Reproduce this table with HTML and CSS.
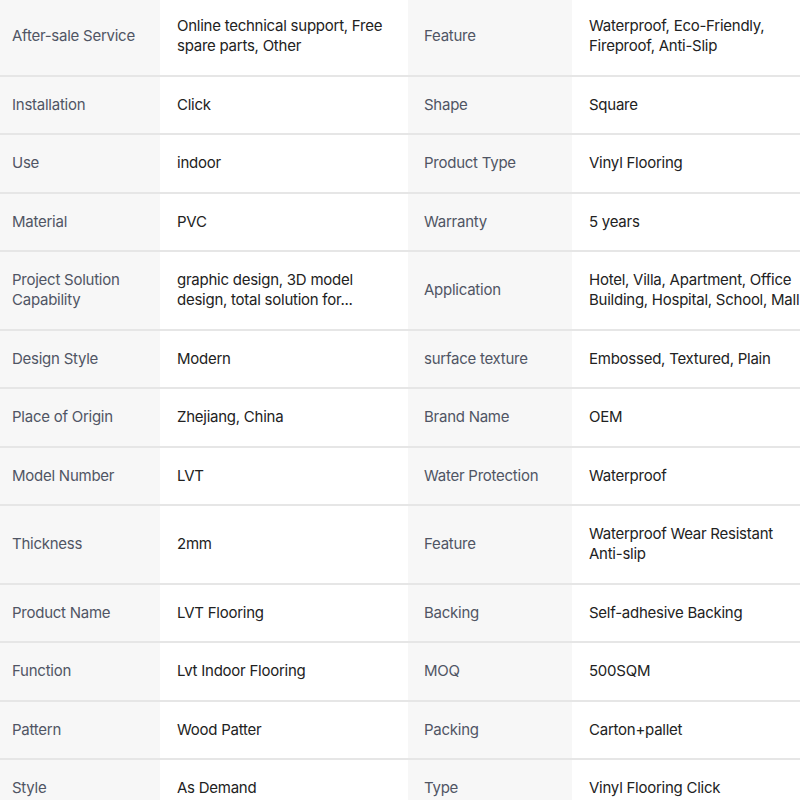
FILE: index.html
```html
<!DOCTYPE html>
<html>
<head>
<meta charset="utf-8">
<link rel="stylesheet" href="styles.css">
</head>
<body>
<div class="specs">
  <div class="row"><div class="k">After-sale Service</div><div class="v">Online technical support, Free spare parts, Other</div><div class="k">Feature</div><div class="v">Waterproof, Eco-Friendly, Fireproof, Anti-Slip</div></div>
  <div class="row"><div class="k">Installation</div><div class="v">Click</div><div class="k">Shape</div><div class="v">Square</div></div>
  <div class="row"><div class="k">Use</div><div class="v">indoor</div><div class="k">Product Type</div><div class="v">Vinyl Flooring</div></div>
  <div class="row"><div class="k">Material</div><div class="v">PVC</div><div class="k">Warranty</div><div class="v">5 years</div></div>
  <div class="row"><div class="k">Project Solution Capability</div><div class="v">graphic design, 3D model design, total solution for...</div><div class="k">Application</div><div class="v">Hotel, Villa, Apartment, Office Building, Hospital, School, Mall</div></div>
  <div class="row"><div class="k">Design Style</div><div class="v">Modern</div><div class="k">surface texture</div><div class="v">Embossed, Textured, Plain</div></div>
  <div class="row"><div class="k">Place of Origin</div><div class="v">Zhejiang, China</div><div class="k">Brand Name</div><div class="v">OEM</div></div>
  <div class="row"><div class="k">Model Number</div><div class="v">LVT</div><div class="k">Water Protection</div><div class="v">Waterproof</div></div>
  <div class="row"><div class="k">Thickness</div><div class="v">2mm</div><div class="k">Feature</div><div class="v">Waterproof Wear Resistant Anti-slip</div></div>
  <div class="row"><div class="k">Product Name</div><div class="v">LVT Flooring</div><div class="k">Backing</div><div class="v">Self-adhesive Backing</div></div>
  <div class="row"><div class="k">Function</div><div class="v">Lvt Indoor Flooring</div><div class="k">MOQ</div><div class="v">500SQM</div></div>
  <div class="row"><div class="k">Pattern</div><div class="v">Wood Patter</div><div class="k">Packing</div><div class="v">Carton+pallet</div></div>
  <div class="row"><div class="k">Style</div><div class="v">As Demand</div><div class="k">Type</div><div class="v">Vinyl Flooring Click</div></div>
</div>
</body>
</html>
```

FILE: styles.css
```css
html, body {
  margin: 0;
  padding: 0;
  background: #ffffff;
  overflow: hidden;
}
.specs {
  width: 824px;
  margin: -2px 0 0 -4px;
  font-family: Inter, "Liberation Sans", sans-serif;
  font-size: 15px;
  letter-spacing: -0.25px;
  line-height: 20px;
}
.row {
  display: grid;
  grid-template-columns: 164px 248px 164px 248px;
  border-bottom: 2px solid #e6e6e6;
}
.k, .v {
  display: flex;
  align-items: center;
  padding: 18.25px 16px 18.25px 16px;
}
.k {
  background: #f7f7f7;
  color: #505564;
}
.v {
  background: #ffffff;
  color: #222222;
  padding-left: 17px;
}
```
